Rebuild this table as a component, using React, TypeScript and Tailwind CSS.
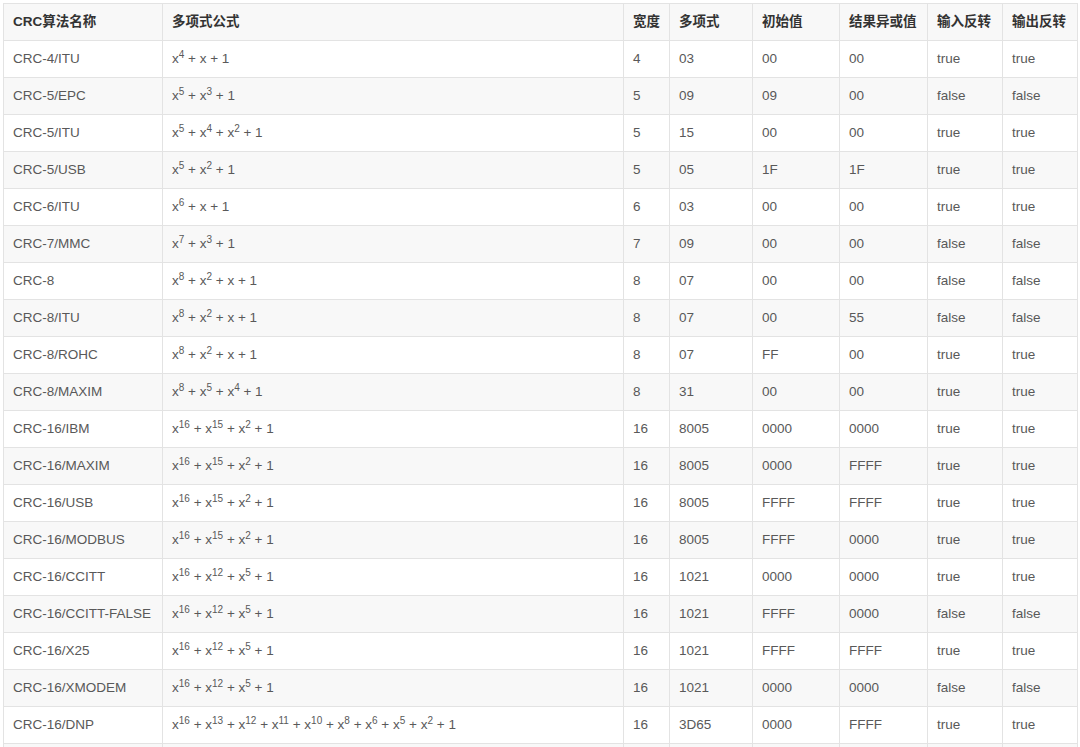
const headers = ['CRC算法名称', '多项式公式', '宽度', '多项式', '初始值', '结果异或值', '输入反转', '输出反转'];

const rows: string[][] = [
  ['CRC-4/ITU', 'x^4 + x + 1', '4', '03', '00', '00', 'true', 'true'],
  ['CRC-5/EPC', 'x^5 + x^3 + 1', '5', '09', '09', '00', 'false', 'false'],
  ['CRC-5/ITU', 'x^5 + x^4 + x^2 + 1', '5', '15', '00', '00', 'true', 'true'],
  ['CRC-5/USB', 'x^5 + x^2 + 1', '5', '05', '1F', '1F', 'true', 'true'],
  ['CRC-6/ITU', 'x^6 + x + 1', '6', '03', '00', '00', 'true', 'true'],
  ['CRC-7/MMC', 'x^7 + x^3 + 1', '7', '09', '00', '00', 'false', 'false'],
  ['CRC-8', 'x^8 + x^2 + x + 1', '8', '07', '00', '00', 'false', 'false'],
  ['CRC-8/ITU', 'x^8 + x^2 + x + 1', '8', '07', '00', '55', 'false', 'false'],
  ['CRC-8/ROHC', 'x^8 + x^2 + x + 1', '8', '07', 'FF', '00', 'true', 'true'],
  ['CRC-8/MAXIM', 'x^8 + x^5 + x^4 + 1', '8', '31', '00', '00', 'true', 'true'],
  ['CRC-16/IBM', 'x^16 + x^15 + x^2 + 1', '16', '8005', '0000', '0000', 'true', 'true'],
  ['CRC-16/MAXIM', 'x^16 + x^15 + x^2 + 1', '16', '8005', '0000', 'FFFF', 'true', 'true'],
  ['CRC-16/USB', 'x^16 + x^15 + x^2 + 1', '16', '8005', 'FFFF', 'FFFF', 'true', 'true'],
  ['CRC-16/MODBUS', 'x^16 + x^15 + x^2 + 1', '16', '8005', 'FFFF', '0000', 'true', 'true'],
  ['CRC-16/CCITT', 'x^16 + x^12 + x^5 + 1', '16', '1021', '0000', '0000', 'true', 'true'],
  ['CRC-16/CCITT-FALSE', 'x^16 + x^12 + x^5 + 1', '16', '1021', 'FFFF', '0000', 'false', 'false'],
  ['CRC-16/X25', 'x^16 + x^12 + x^5 + 1', '16', '1021', 'FFFF', 'FFFF', 'true', 'true'],
  ['CRC-16/XMODEM', 'x^16 + x^12 + x^5 + 1', '16', '1021', '0000', '0000', 'false', 'false'],
  ['CRC-16/DNP', 'x^16 + x^13 + x^12 + x^11 + x^10 + x^8 + x^6 + x^5 + x^2 + 1', '16', '3D65', '0000', 'FFFF', 'true', 'true'],
  ['CRC-32', 'x^32 + x^26 + x^23 + x^22 + x^16 + x^12 + x^11 + x^10 + x^8 + x^7 + x^5 + x^4 + x^2 + x + 1', '32', '04C11DB7', 'FFFFFFFF', 'FFFFFFFF', 'true', 'true'],
];

const colWidths = ['w-[159px]', 'w-[461px]', 'w-[46px]', 'w-[83px]', 'w-[87px]', 'w-[88px]', 'w-[75px]', 'w-[75px]'];

function Formula({ text }: { text: string }) {
  const terms = text.split(' + ');
  return (
    <span>
      {terms.map((t, i) => {
        const [base, exp] = t.split('^');
        return (
          <span key={i}>
            {i > 0 && ' + '}
            {base}
            {exp && <sup className="text-[10px]">{exp}</sup>}
          </span>
        );
      })}
    </span>
  );
}

export default function App() {
  return (
    <div className="min-h-screen bg-white pl-[3px] pt-[3px] font-['Liberation_Sans','Noto_Sans_CJK_SC',sans-serif] text-[13.5px]">
      <table className="w-[1074px] table-fixed border-collapse border border-[#e3e3e3]">
        <colgroup>
          {colWidths.map((w, i) => (
            <col key={i} className={w} />
          ))}
        </colgroup>
        <thead>
          <tr className="h-[37px] bg-[#f8f8f8]">
            {headers.map((h) => (
              <th key={h} className="whitespace-nowrap border border-[#e3e3e3] px-[9px] text-left font-bold text-[#333]">
                {h}
              </th>
            ))}
          </tr>
        </thead>
        <tbody>
          {rows.map((r, i) => (
            <tr key={r[0]} className={`h-[37px] ${i % 2 === 0 ? 'bg-white' : 'bg-[#f8f8f8]'}`}>
              {r.map((c, j) => (
                <td key={j} className="overflow-hidden whitespace-nowrap border border-[#e3e3e3] px-[9px] text-left text-[#595959]">
                  {j === 1 ? <Formula text={c} /> : c}
                </td>
              ))}
            </tr>
          ))}
        </tbody>
      </table>
    </div>
  );
}
